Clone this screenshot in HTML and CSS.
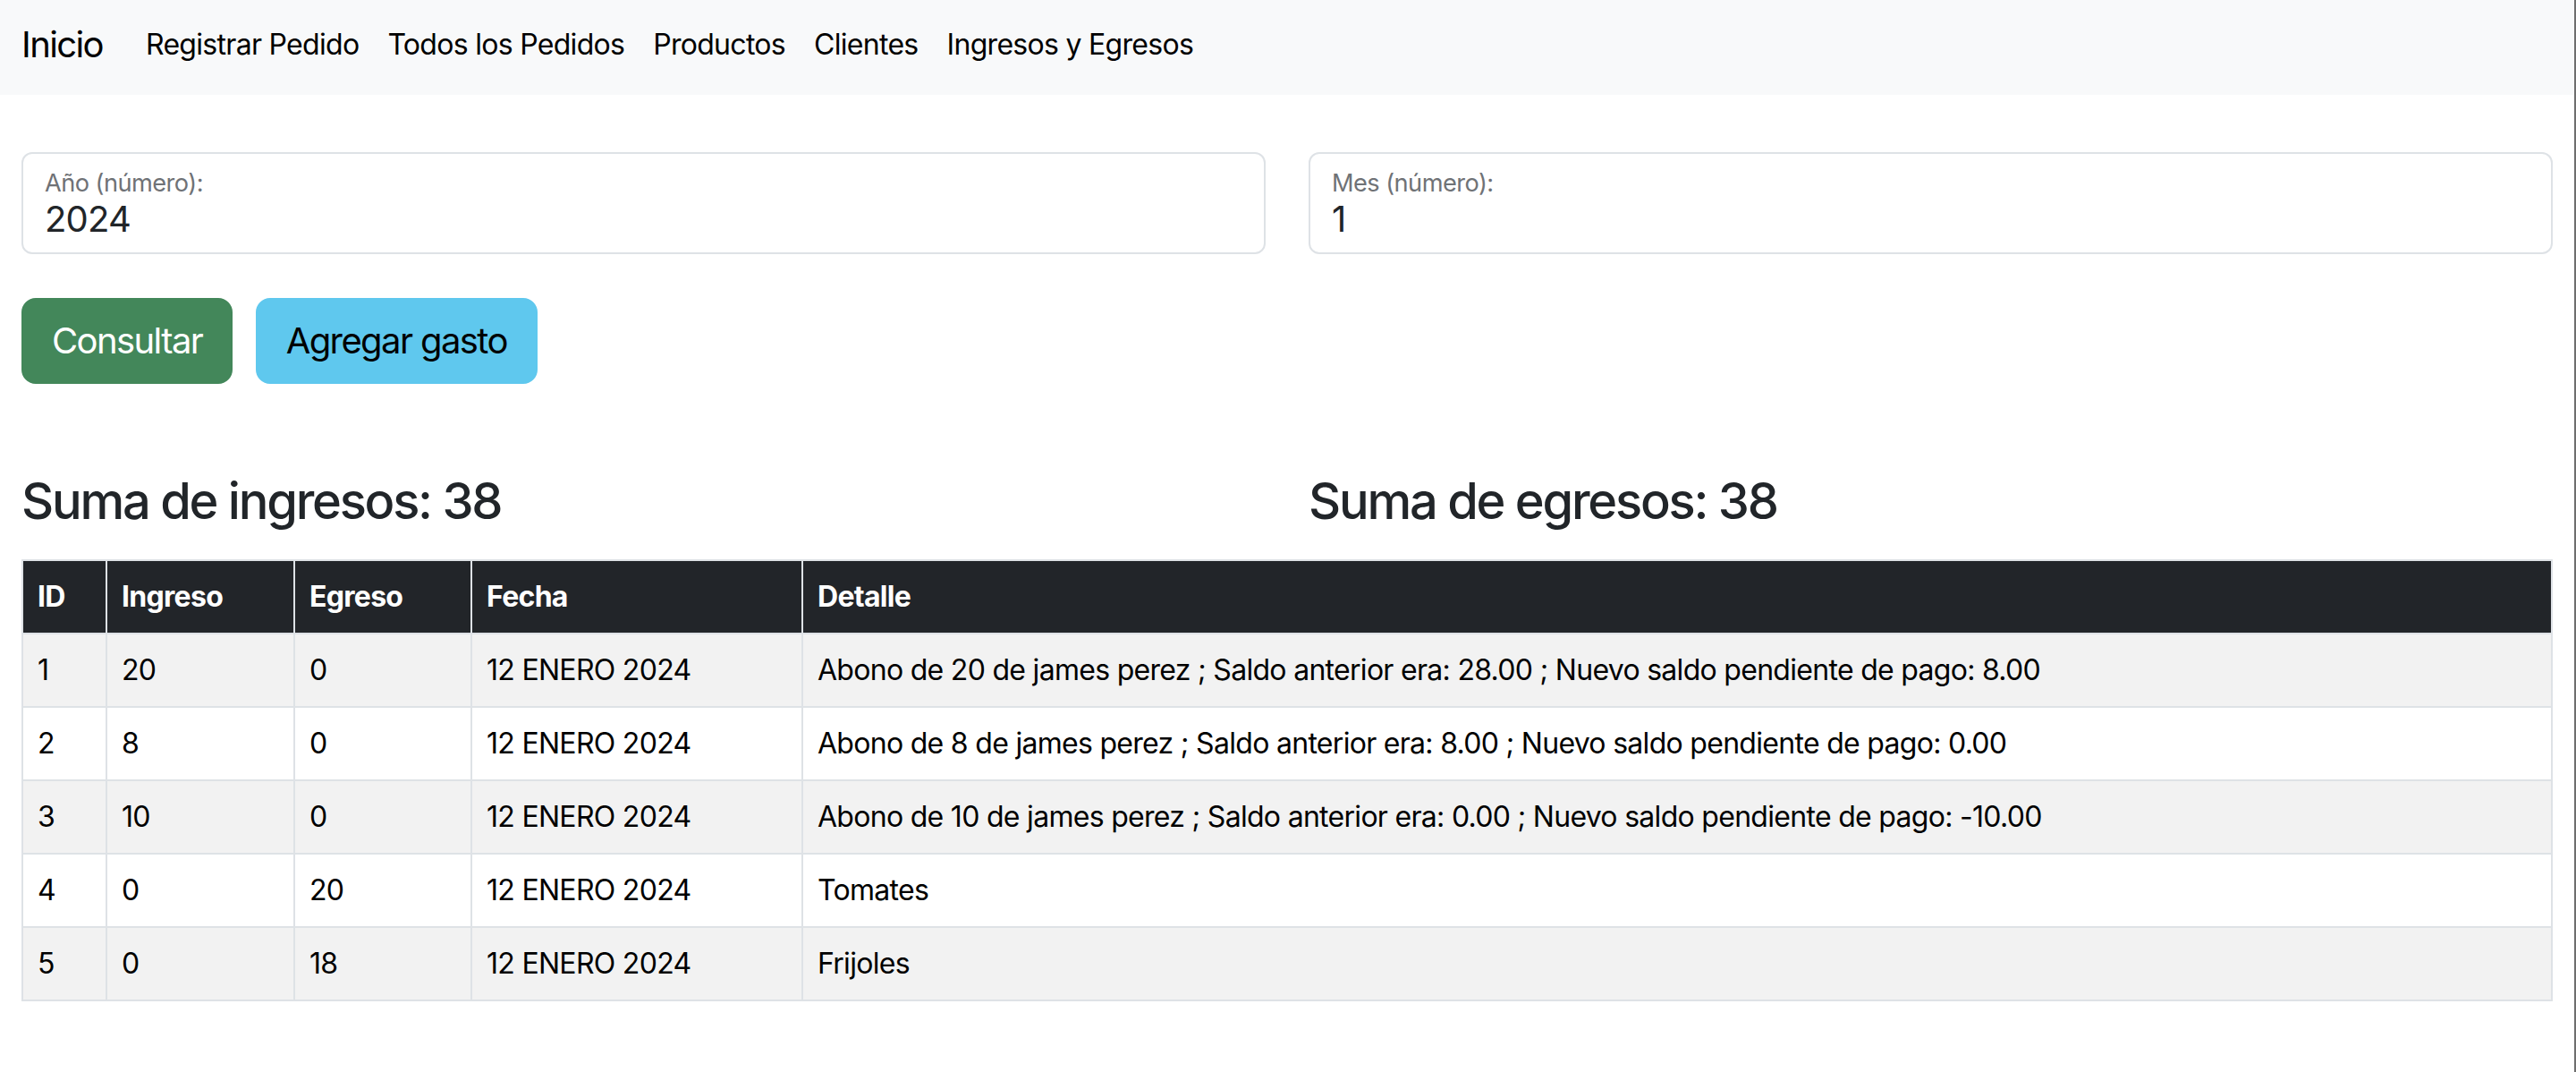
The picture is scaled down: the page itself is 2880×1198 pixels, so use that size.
FILE: index.html
```html
<!DOCTYPE html>
<html lang="es">
<head>
<meta charset="utf-8">
<title>Ingresos y Egresos</title>
<link rel="stylesheet" href="styles.css">
</head>
<body class="page">
<nav class="navbar">
  <a class="brand" href="#">Inicio</a>
  <ul class="nav-list">
    <li><a class="nav-link" href="#">Registrar Pedido</a></li>
    <li><a class="nav-link" href="#">Todos los Pedidos</a></li>
    <li><a class="nav-link" href="#">Productos</a></li>
    <li><a class="nav-link" href="#">Clientes</a></li>
    <li><a class="nav-link" href="#">Ingresos y Egresos</a></li>
  </ul>
</nav>
<main class="container">
  <div class="grid-2 fields">
    <div class="field">
      <label class="field-label" for="anio">Año (número):</label>
      <input class="field-input" id="anio" type="text" value="2024">
    </div>
    <div class="field">
      <label class="field-label" for="mes">Mes (número):</label>
      <input class="field-input" id="mes" type="text" value="1">
    </div>
  </div>
  <div class="actions">
    <button class="btn btn-success" type="button">Consultar</button>
    <button class="btn btn-info" type="button">Agregar gasto</button>
  </div>
  <div class="grid-2 totals">
    <h3 class="total">Suma de ingresos: 38</h3>
    <h3 class="total">Suma de egresos: 38</h3>
  </div>
  <table class="table">
    <colgroup>
      <col class="c-id">
      <col class="c-ing">
      <col class="c-egr">
      <col class="c-fecha">
      <col class="c-det">
    </colgroup>
    <thead>
      <tr><th>ID</th><th>Ingreso</th><th>Egreso</th><th>Fecha</th><th>Detalle</th></tr>
    </thead>
    <tbody>
      <tr><td>1</td><td>20</td><td>0</td><td>12 ENERO 2024</td><td>Abono de 20 de james perez ; Saldo anterior era: 28.00 ; Nuevo saldo pendiente de pago: 8.00</td></tr>
      <tr><td>2</td><td>8</td><td>0</td><td>12 ENERO 2024</td><td>Abono de 8 de james perez ; Saldo anterior era: 8.00 ; Nuevo saldo pendiente de pago: 0.00</td></tr>
      <tr><td>3</td><td>10</td><td>0</td><td>12 ENERO 2024</td><td>Abono de 10 de james perez ; Saldo anterior era: 0.00 ; Nuevo saldo pendiente de pago: -10.00</td></tr>
      <tr><td>4</td><td>0</td><td>20</td><td>12 ENERO 2024</td><td>Tomates</td></tr>
      <tr><td>5</td><td>0</td><td>18</td><td>12 ENERO 2024</td><td>Frijoles</td></tr>
    </tbody>
  </table>
</main>
</body>
</html>
```
FILE: styles.css
```css
html {
  zoom: 2;
}
* {
  box-sizing: border-box;
}
.page {
  margin: 0;
  min-height: 599px;
  border-right: 1px solid #6e6e6e;
  background: #fff;
  font-family: Inter, "Noto Sans", sans-serif;
  font-size: 16px;
  line-height: 1.5;
  letter-spacing: -0.022em;
  color: #212529;
}
.navbar {
  height: 53px;
  padding: 0 12px 3px;
  display: flex;
  align-items: center;
  background: #f8f9fa;
}
.brand {
  font-size: 20px;
  line-height: 30px;
  letter-spacing: -0.04em;
  color: #000;
  text-decoration: none;
  margin-right: 16px;
}
.nav-list {
  list-style: none;
  margin: 0;
  padding: 0;
  display: flex;
}
.nav-link {
  display: block;
  padding: 8px 8px;
  line-height: 24px;
  color: #000;
  text-decoration: none;
}
.container {
  padding: 32px 12px 0;
}
.grid-2 {
  display: grid;
  grid-template-columns: 1fr 1fr;
  column-gap: 24px;
}
.field {
  height: 57px;
  border: 1px solid #dee2e6;
  border-radius: 6px;
  padding: 8.6px 12px 0;
  display: flex;
  flex-direction: column;
}
.field-label {
  font-size: 13.6px;
  line-height: 16px;
  letter-spacing: -0.02em;
  color: #6f7276;
}
.field-input {
  border: 0;
  padding: 0;
  margin: 0;
  outline: none;
  background: transparent;
  font-family: inherit;
  font-size: 20px;
  line-height: 24px;
  height: 24px;
  letter-spacing: -0.02em;
  color: #212529;
}
.actions {
  margin-top: 24.5px;
  display: flex;
  gap: 12.7px;
}
.btn {
  height: 48px;
  padding: 0 16px;
  border: 1px solid transparent;
  border-radius: 8px;
  font-family: inherit;
  font-size: 20px;
  line-height: 46px;
  letter-spacing: -0.04em;
}
.btn-success {
  background: #43875a;
  border-color: #43875a;
  color: #fff;
}
.btn-info {
  background: #5fc8ee;
  border-color: #5fc8ee;
  color: #000;
}
.totals {
  margin-top: 48.8px;
}
.total {
  margin: 0;
  font-size: 28px;
  font-weight: 500;
  line-height: 33.6px;
  letter-spacing: -0.04em;
  color: #212529;
}
.table {
  margin-top: 15.7px;
  width: 100%;
  border-collapse: collapse;
  table-layout: fixed;
  border: 1px solid #dee2e6;
  color: #000;
}
.c-id { width: 47px; }
.c-ing { width: 105px; }
.c-egr { width: 99px; }
.c-fecha { width: 185px; }
.table th,
.table td {
  border: 1px solid #dee2e6;
  padding: 8px;
  line-height: 24px;
  text-align: left;
  vertical-align: top;
}
.table th {
  background: #222529;
  color: #fff;
  font-weight: 700;
}
.table tbody tr:nth-child(odd) td {
  background: #f2f2f2;
}
```
